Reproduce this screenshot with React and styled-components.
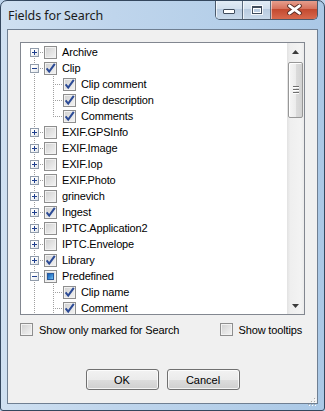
import React from 'react';
import styled, { createGlobalStyle } from 'styled-components';

const GlobalStyle = createGlobalStyle`
  html, body {
    margin: 0;
    padding: 0;
    background: #bdd4ec;
  }
  body {
    font-family: 'Liberation Sans', Arial, sans-serif;
  }
`;

const fields = [
  { label: 'Archive', state: 'off', expander: 'plus' },
  { label: 'Clip', state: 'on', expander: 'minus' },
  { label: 'Clip comment', state: 'on', level: 1 },
  { label: 'Clip description', state: 'on', level: 1 },
  { label: 'Comments', state: 'on', level: 1, last: true },
  { label: 'EXIF.GPSInfo', state: 'off', expander: 'plus' },
  { label: 'EXIF.Image', state: 'off', expander: 'plus' },
  { label: 'EXIF.Iop', state: 'off', expander: 'plus' },
  { label: 'EXIF.Photo', state: 'off', expander: 'plus' },
  { label: 'grinevich', state: 'off', expander: 'plus' },
  { label: 'Ingest', state: 'on', expander: 'plus' },
  { label: 'IPTC.Application2', state: 'off', expander: 'plus' },
  { label: 'IPTC.Envelope', state: 'off', expander: 'plus' },
  { label: 'Library', state: 'on', expander: 'plus' },
  { label: 'Predefined', state: 'mixed', expander: 'minus' },
  { label: 'Clip name', state: 'on', level: 1 },
  { label: 'Comment', state: 'on', level: 1 },
];

const dotsV = 'repeating-linear-gradient(to bottom, #a0a0a0 0 1px, transparent 1px 2px)';
const dotsH = 'repeating-linear-gradient(to right, #a0a0a0 0 1px, transparent 1px 2px)';

export default function App() {
  return (
    <>
      <GlobalStyle />
      <Window>
        <TitleBar>
          <Title>Fields for Search</Title>
          <Controls>
            <CaptionButton $w={27}>
              <MinGlyph />
            </CaptionButton>
            <CaptionButton $w={28}>
              <MaxGlyph />
            </CaptionButton>
            <CloseButton>
              <svg width="15" height="11" viewBox="0 0 15 11">
                <path d="M2.5 1.8 L12.5 9.2 M12.5 1.8 L2.5 9.2" stroke="#5a2e26" strokeWidth="4.6" strokeLinecap="round" />
                <path d="M2.5 1.8 L12.5 9.2 M12.5 1.8 L2.5 9.2" stroke="#ffffff" strokeWidth="2.8" strokeLinecap="round" />
              </svg>
            </CloseButton>
          </Controls>
        </TitleBar>

        <Client>
          <TreeBox>
            <Rows>
              {fields.map((f, i) => (
                <Row key={i}>
                  <Guide $top={i > 0} $bottom $branch={!f.level}>
                    {f.expander && <Expander>{f.expander === 'plus' ? <PlusSign /> : <MinusSign />}</Expander>}
                  </Guide>
                  {f.level === 1 && <Guide $top $bottom={!f.last} $branch />}
                  <TreeCheck $state={f.state}>
                    {f.state === 'on' && <CheckMark />}
                    {f.state === 'mixed' && <MixedFill />}
                  </TreeCheck>
                  <Label>{f.label}</Label>
                </Row>
              ))}
            </Rows>
            <ScrollBar>
              <ArrowButton>
                <svg width="7" height="4" viewBox="0 0 7 4"><path d="M0 4 L3.5 0 L7 4 Z" fill="#3c3c3c" /></svg>
              </ArrowButton>
              <Thumb>
                <Grip />
                <Grip />
                <Grip />
              </Thumb>
              <Track />
              <ArrowButton>
                <svg width="7" height="4" viewBox="0 0 7 4"><path d="M0 0 L7 0 L3.5 4 Z" fill="#3c3c3c" /></svg>
              </ArrowButton>
            </ScrollBar>
          </TreeBox>

          <Options>
            <Option>
              <TreeCheck $state="off" />
              <OptionText>Show only marked for Search</OptionText>
            </Option>
            <Option>
              <TreeCheck $state="off" />
              <OptionText>Show tooltips</OptionText>
            </Option>
          </Options>

          <Buttons>
            <DialogButton>OK</DialogButton>
            <DialogButton>Cancel</DialogButton>
          </Buttons>

          <SizeGrip>
            <svg width="10" height="10" viewBox="0 0 10 10">
              {[[8, 2], [8, 5], [5, 5], [8, 8], [5, 8], [2, 8]].map(([x, y], k) => (
                <g key={k}>
                  <rect x={x + 1} y={y + 1} width="1" height="1" fill="#ffffff" />
                  <rect x={x} y={y} width="1" height="1" fill="#a9a9a9" />
                </g>
              ))}
            </svg>
          </SizeGrip>
        </Client>
      </Window>
    </>
  );
}

function CheckMark() {
  return (
    <svg width="11" height="11" viewBox="0 0 11 11" style={{ display: 'block' }}>
      <path d="M1.6 5.4 L4.2 8.6 L9.8 0.8" fill="none" stroke="#2c4b96" strokeWidth="2" strokeLinejoin="miter" />
    </svg>
  );
}

const Window = styled.div`
  width: 325px;
  height: 411px;
  box-sizing: border-box;
  border: 1px solid #34475e;
  border-radius: 7px 7px 3px 3px;
  padding: 0 6px 6px 6px;
  display: flex;
  flex-direction: column;
  background: linear-gradient(to right, #cfe0f1 0%, #bfd5ec 35%, #b5cfe9 70%, #aac8e6 100%);
  overflow: hidden;
`;

const TitleBar = styled.div`
  height: 28px;
  display: flex;
  align-items: center;
  justify-content: space-between;
`;

const Title = styled.div`
  padding-left: 1px;
  font-family: 'Noto Sans', 'Liberation Sans', sans-serif;
  font-size: 12.5px;
  color: #1b1b1b;
  letter-spacing: -0.1px;
`;

const Controls = styled.div`
  align-self: flex-start;
  margin-top: -1px;
  display: flex;
  height: 20px;
  border: 1px solid #4b5a6c;
  border-top: none;
  border-radius: 0 0 5px 5px;
  overflow: hidden;
  box-sizing: border-box;
`;

const CaptionButton = styled.div`
  width: ${(p) => p.$w - 1}px;
  display: flex;
  align-items: center;
  justify-content: center;
  background: linear-gradient(to bottom, #e4edf6 0%, #d3e0ee 45%, #b9cbe0 50%, #c9d9ea 100%);
  border-right: 1px solid #5b6b7e;
  box-shadow: inset 1px 1px 0 rgba(255, 255, 255, 0.7);
`;

const MinGlyph = styled.span`
  width: 10px;
  height: 3px;
  margin-top: 4px;
  background: #ffffff;
  border: 1px solid #404c5c;
  border-radius: 1px;
`;

const MaxGlyph = styled.span`
  width: 8px;
  height: 5px;
  border: 1px solid #404c5c;
  border-top-width: 2px;
  background: transparent;
  box-shadow: inset 0 0 0 1px #ffffff, 0 0 0 1px rgba(255, 255, 255, 0.8);
`;

const CloseButton = styled.div`
  width: 46px;
  display: flex;
  align-items: center;
  justify-content: center;
  background: linear-gradient(to bottom, #e8a493 0%, #d7735e 45%, #c34a30 50%, #d86a4e 100%);
  box-shadow: inset 1px 1px 0 rgba(255, 255, 255, 0.5);
`;

const Client = styled.div`
  position: relative;
  flex: 1;
  display: flex;
  flex-direction: column;
  padding: 12px 12px 13px 12px;
  background: #f0f0f0;
  border: 1px solid #6f7f92;
`;

const TreeBox = styled.div`
  height: 273px;
  box-sizing: border-box;
  display: flex;
  background: #ffffff;
  border: 1px solid #828790;
`;

const Rows = styled.div`
  flex: 1;
  overflow: hidden;
  padding: 1px 0 0 4px;
`;

const Row = styled.div`
  height: 16px;
  display: flex;
  align-items: flex-start;
`;

const Guide = styled.div`
  width: 19px;
  height: 16px;
  flex-shrink: 0;
  display: flex;
  align-items: flex-start;
  background:
    ${(p) => (p.$top ? `${dotsV} 9px 0 / 1px 8px no-repeat,` : '')}
    ${(p) => (p.$bottom ? `${dotsV} 9px 8px / 1px 8px no-repeat,` : '')}
    ${(p) => (p.$branch ? `${dotsH} 9px 8px / 10px 1px no-repeat,` : '')}
    transparent;
`;

const Expander = styled.span`
  width: 9px;
  height: 9px;
  box-sizing: border-box;
  margin: 4px 0 0 5px;
  border: 1px solid #919cab;
  background: linear-gradient(to bottom right, #ffffff 30%, #dfe4ea 100%);
  display: flex;
  align-items: center;
  justify-content: center;
`;

const MinusSign = styled.span`
  width: 5px;
  height: 1px;
  background: #1f3f8e;
`;

const PlusSign = styled(MinusSign)`
  background:
    linear-gradient(#1f3f8e, #1f3f8e) center / 5px 1px no-repeat,
    linear-gradient(#1f3f8e, #1f3f8e) center / 1px 5px no-repeat;
  height: 5px;
`;

const TreeCheck = styled.span`
  width: 13px;
  height: 13px;
  margin-top: 2px;
  flex-shrink: 0;
  box-sizing: border-box;
  border: 1px solid #8e8e8e;
  background: linear-gradient(to bottom right, #cfcfcf 0%, #e4e4e4 55%, #f4f4f4 100%);
  box-shadow: inset 0 0 0 1px #f2f2f2;
  display: flex;
  align-items: center;
  justify-content: center;
`;

const MixedFill = styled.span`
  width: 7px;
  height: 7px;
  border: 1px solid #2a5a9c;
  box-sizing: border-box;
  background: linear-gradient(to bottom right, #1b5fb5 0%, #3d8ed6 55%, #7cc5ee 100%);
`;

const Label = styled.span`
  margin-left: 5px;
  font-size: 11px;
  line-height: 16px;
  letter-spacing: -0.15px;
  color: #000000;
  white-space: nowrap;
`;

const ScrollBar = styled.div`
  width: 17px;
  flex-shrink: 0;
  display: flex;
  flex-direction: column;
  background: linear-gradient(to right, #e2e2e2 0%, #efefef 20%, #f3f3f3 80%, #ececec 100%);
`;

const ArrowButton = styled.div`
  height: 17px;
  display: flex;
  align-items: center;
  justify-content: center;
`;

const Thumb = styled.div`
  height: 56px;
  margin: 2px 1px 0 1px;
  box-sizing: border-box;
  border: 1px solid #979797;
  border-radius: 2px;
  background: linear-gradient(to right, #f6f6f6 0%, #ececec 50%, #dcdcdc 51%, #d2d2d2 100%);
  box-shadow: inset 1px 1px 0 #ffffff;
  display: flex;
  flex-direction: column;
  align-items: center;
  justify-content: center;
  gap: 1px;
`;

const Grip = styled.span`
  width: 6px;
  height: 1px;
  background: #6e6e6e;
  border-bottom: 1px solid #ffffff;
`;

const Track = styled.div`
  flex: 1;
`;

const Options = styled.div`
  margin-top: 8px;
  display: flex;
  justify-content: space-between;
  padding-right: 3px;
`;

const Option = styled.label`
  display: flex;
  align-items: center;
  gap: 6px;
  height: 13px;

  ${TreeCheck} {
    margin-top: 0;
  }
`;

const OptionText = styled.span`
  font-size: 11px;
  letter-spacing: -0.15px;
  color: #000000;
  white-space: nowrap;
`;

const Buttons = styled.div`
  margin-top: auto;
  display: flex;
  justify-content: center;
  gap: 8px;
`;

const DialogButton = styled.button`
  width: 73px;
  height: 21px;
  padding: 0;
  border: 1px solid #707070;
  border-radius: 3px;
  background: linear-gradient(to bottom, #f2f2f2 0%, #ebebeb 50%, #dddddd 51%, #cfcfcf 100%);
  box-shadow: inset 0 0 0 1px rgba(255, 255, 255, 0.75);
  font-family: 'Liberation Sans', Arial, sans-serif;
  font-size: 11px;
  color: #000000;
`;

const SizeGrip = styled.div`
  position: absolute;
  right: 1px;
  bottom: 1px;
  width: 10px;
  height: 10px;
`;
